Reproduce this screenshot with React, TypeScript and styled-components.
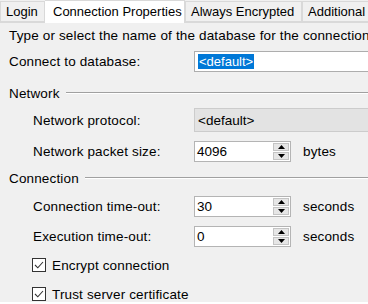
import React from "react";
import styled, { createGlobalStyle } from "styled-components";

const Global = createGlobalStyle`
  html, body { margin: 0; padding: 0; background: #f0f0f0; }
  body { font-family: "Liberation Sans", Arial, sans-serif; font-size: 13.5px; letter-spacing: 0.15px; color: #000; }
`;

const Root = styled.div`
  width: 368px;
  height: 304px;
  overflow: hidden;
  background: #f0f0f0;
  display: flex;
  flex-direction: column;
  white-space: nowrap;
  position: relative;
`;

const TabStrip = styled.div`
  display: flex;
  align-items: flex-end;
  height: 22px;
  border-bottom: 1px solid #d9d9d9;
  flex: 0 0 auto;
`;

const Tab = styled.div<{ $active?: boolean; $width: number }>`
  flex: 0 0 ${(p) => p.$width}px;
  box-sizing: border-box;
  height: ${(p) => (p.$active ? 23 : 21)}px;
  margin-bottom: ${(p) => (p.$active ? -1 : 0)}px;
  padding: ${(p) => (p.$active ? "2px 0 0 8px" : "1px 0 0 5px")};
  background: ${(p) => (p.$active ? "#ffffff" : "#f0f0f0")};
  border: 1px solid #d9d9d9;
  border-bottom: ${(p) => (p.$active ? "none" : "1px solid #d9d9d9")};
  border-left: ${(p) => (p.$active ? "none" : "1px solid #d9d9d9")};
  font-size: 13px;
  line-height: 17px;
  letter-spacing: 0;
  overflow: hidden;
`;

const Panel = styled.div`
  flex: 1 1 auto;
  display: flex;
  flex-direction: column;
  padding: 5px 0 0 9px;
  border-bottom: 2px solid #ffffff;
`;

const Description = styled.div`
  height: 16px;
  line-height: 16px;
`;

const Row = styled.div<{ $indent?: number; $h: number; $mt: number }>`
  display: flex;
  align-items: center;
  height: ${(p) => p.$h}px;
  margin-top: ${(p) => p.$mt}px;
  padding-left: ${(p) => p.$indent ?? 0}px;
`;

const Label = styled.div<{ $indent?: number }>`
  flex: 0 0 ${(p) => 185 - (p.$indent ?? 0)}px;
`;

const TextBox = styled.div<{ $disabled?: boolean }>`
  flex: 0 0 200px;
  box-sizing: border-box;
  height: ${(p) => (p.$disabled ? 24 : 21)}px;
  display: flex;
  align-items: center;
  padding-left: 3px;
  letter-spacing: 0;
  background: ${(p) => (p.$disabled ? "#e3e3e3" : "#ffffff")};
  border: 1px solid ${(p) => (p.$disabled ? "#cccccc" : "#adadad")};
`;

const Selected = styled.span`
  background: #0078d7;
  color: #ffffff;
  padding: 0 1px;
  font-size: 13px;
  line-height: 15px;
`;

const GroupHeader = styled.div<{ $mt: number }>`
  display: flex;
  align-items: center;
  gap: 6px;
  height: 16px;
  margin-top: ${(p) => p.$mt}px;
  &::after {
    content: "";
    flex: 1 1 auto;
    height: 0;
    border-top: 1px solid #a0a0a0;
    border-bottom: 1px solid #ffffff;
  }
`;

const Spin = styled.div`
  flex: 0 0 auto;
  width: 97px;
  height: 21px;
  box-sizing: border-box;
  display: flex;
  background: #ffffff;
  border: 1px solid #b4b4b4;
`;

const SpinValue = styled.div`
  flex: 1 1 auto;
  padding-left: 2px;
  line-height: 19px;
  letter-spacing: 0;
`;

const SpinButtons = styled.div`
  flex: 0 0 16px;
  display: flex;
  flex-direction: column;
  gap: 1px;
  padding: 1px 1px 1px 0;
  background: #ffffff;
`;

const SpinButton = styled.div`
  flex: 1 1 0;
  display: flex;
  align-items: center;
  justify-content: center;
  background: #e6e6e6;
  border: 1px solid #c4c4c4;
`;

const Unit = styled.div`
  margin-left: 12px;
`;

const CheckRow = styled.div<{ $mt: number }>`
  display: flex;
  align-items: center;
  gap: 6px;
  height: 16px;
  margin-top: ${(p) => p.$mt}px;
  padding-left: 23px;
`;

const CheckBox = styled.div`
  width: 14px;
  height: 14px;
  box-sizing: border-box;
  background: #ffffff;
  border: 1px solid #333333;
  display: flex;
  align-items: center;
  justify-content: center;
`;

const Arrow = ({ up }: { up?: boolean }) => (
  <svg width="7" height="4" viewBox="0 0 7 4">
    <path d={up ? "M0 4 L3.5 0 L7 4 Z" : "M0 0 L3.5 4 L7 0 Z"} fill="#000" />
  </svg>
);

const SpinBox = ({ value }: { value: string }) => (
  <Spin>
    <SpinValue>{value}</SpinValue>
    <SpinButtons>
      <SpinButton>
        <Arrow up />
      </SpinButton>
      <SpinButton>
        <Arrow />
      </SpinButton>
    </SpinButtons>
  </Spin>
);

const Check = ({ label, mt }: { label: string; mt: number }) => (
  <CheckRow $mt={mt}>
    <CheckBox>
      <svg width="12" height="12" viewBox="0 0 12 12">
        <path d="M2 6 L4.8 8.8 L10 3" fill="none" stroke="#333" strokeWidth="1.1" />
      </svg>
    </CheckBox>
    {label}
  </CheckRow>
);

export default function App() {
  return (
    <Root>
      <Global />
      <TabStrip>
        <Tab $width={45}>Login</Tab>
        <Tab $width={140} $active>
          Connection Properties
        </Tab>
        <Tab $width={117}>Always Encrypted</Tab>
        <Tab $width={80}>Additional</Tab>
      </TabStrip>
      <Panel>
        <Description>Type or select the name of the database for the connection</Description>
        <Row $h={21} $mt={7}>
          <Label>Connect to database:</Label>
          <TextBox>
            <Selected>&lt;default&gt;</Selected>
          </TextBox>
        </Row>
        <GroupHeader $mt={13}>Network</GroupHeader>
        <Row $indent={24} $h={24} $mt={7}>
          <Label $indent={24}>Network protocol:</Label>
          <TextBox $disabled>&lt;default&gt;</TextBox>
        </Row>
        <Row $indent={24} $h={21} $mt={9}>
          <Label $indent={24}>Network packet size:</Label>
          <SpinBox value="4096" />
          <Unit>bytes</Unit>
        </Row>
        <GroupHeader $mt={8}>Connection</GroupHeader>
        <Row $indent={24} $h={21} $mt={10}>
          <Label $indent={24}>Connection time-out:</Label>
          <SpinBox value="30" />
          <Unit>seconds</Unit>
        </Row>
        <Row $indent={24} $h={21} $mt={9}>
          <Label $indent={24}>Execution time-out:</Label>
          <SpinBox value="0" />
          <Unit>seconds</Unit>
        </Row>
        <Check label="Encrypt connection" mt={10} />
        <Check label="Trust server certificate" mt={13} />
      </Panel>
    </Root>
  );
}
